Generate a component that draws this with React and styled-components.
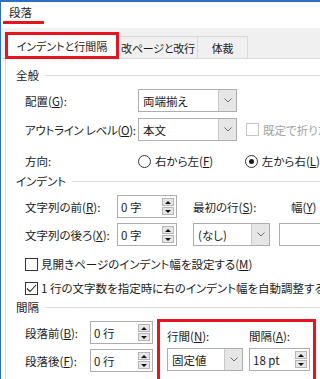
import React from 'react';
import styled, { createGlobalStyle } from 'styled-components';

const RED = '#e5141e';
const BLUE = '#2b6fc2';

const Global = createGlobalStyle`
  html, body { margin: 0; padding: 0; background: #fff; overflow: hidden; }
  body { font-family: "Noto Sans CJK JP", "Noto Sans", sans-serif; }
`;

const Window = styled.div`
  width: 320px;
  height: 379px;
  box-sizing: border-box;
  border-top: 2px solid ${BLUE};
  border-left: 1px solid ${BLUE};
  background: #fff;
  overflow: hidden;
  color: #1b1b1b;
  font-size: 11.5px;
  line-height: 16px;
  font-feature-settings: "palt";
  display: flex;
  flex-direction: column;
  white-space: nowrap;
`;

const TitleBar = styled.div`
  height: 28px;
  box-sizing: border-box;
  padding-top: 2px;
  display: flex;
  align-items: flex-start;
`;

const Title = styled.span`
  margin-left: 2px;
  padding: 0 12px 1px 6px;
  border-bottom: 3px solid ${RED};
  font-size: 11.5px;
  color: #222;
`;

const TabStrip = styled.div`
  height: 33px;
  box-sizing: border-box;
  background: #f0f0f0;
  border-bottom: 1px solid #dadada;
  display: flex;
  align-items: flex-end;
  padding-left: 4px;
`;

const Tab = styled.div`
  box-sizing: border-box;
  display: flex;
  align-items: center;
  justify-content: center;
  font-size: 11px;
  letter-spacing: ${p => (p.$active ? 0 : -0.2)}px;
  width: ${p => p.$w}px;
  height: ${p => (p.$active ? 27 : 22)}px;
  margin-bottom: ${p => (p.$active ? -1 : 0)}px;
  margin-left: ${p => p.$ml || 0}px;
  background: ${p => (p.$active ? '#fff' : '#f0f0f0')};
  border: ${p => (p.$active ? `3px solid ${RED}` : '1px solid #d9d9d9')};
  border-bottom: ${p => (p.$active ? `3px solid ${RED}` : 'none')};
  position: relative;
  z-index: ${p => (p.$active ? 1 : 0)};
`;

const Panel = styled.div`
  flex: 1;
  margin-left: 4px;
  border-left: 1px solid #dadada;
  padding: 8px 0 0 10px;
  display: flex;
  flex-direction: column;
`;

const GroupHeader = styled.div`
  display: flex;
  align-items: center;
  height: 16px;
  margin-top: ${p => p.$mt || 0}px;
  &::after {
    content: '';
    flex: 1;
    height: 1px;
    background: #dcdcdc;
    margin-left: 6px;
  }
`;

const Row = styled.div`
  display: flex;
  align-items: center;
  padding-left: 9px;
  height: ${p => p.$h}px;
  margin-top: ${p => p.$mt}px;
`;

const Label = styled.span`
  display: inline-block;
  width: ${p => (p.$w ? `${p.$w}px` : 'auto')};
  flex: none;
  margin-left: ${p => p.$ml || 0}px;
  letter-spacing: ${p => p.$ls || 0}px;
  color: ${p => (p.$disabled ? '#a3a3a3' : 'inherit')};
`;

const SelectBox = styled.div`
  box-sizing: border-box;
  width: ${p => p.$w}px;
  height: 23px;
  border: 1px solid #adadad;
  background: #fff;
  display: flex;
  align-items: stretch;
  flex: none;
`;

const SelectText = styled.span`
  flex: 1;
  display: flex;
  align-items: center;
  padding-left: 4px;
`;

const SelectArrow = styled.span`
  width: 17px;
  background: #e6e6e6;
  border-left: 1px solid #c9c9c9;
  display: flex;
  align-items: center;
  justify-content: center;
`;

const Chevron = () => (
  <svg width="8" height="5" viewBox="0 0 8 5">
    <path d="M0.5 0.5 L4 4 L7.5 0.5" fill="none" stroke="#6b6b6b" strokeWidth="1" />
  </svg>
);

const Select = ({ w, children }) => (
  <SelectBox $w={w}>
    <SelectText>{children}</SelectText>
    <SelectArrow>
      <Chevron />
    </SelectArrow>
  </SelectBox>
);

const SpinBox = styled.div`
  box-sizing: border-box;
  width: ${p => p.$w}px;
  height: 23px;
  border: 1px solid #adadad;
  background: #fff;
  display: flex;
  align-items: stretch;
  flex: none;
`;

const SpinText = styled.span`
  flex: 1;
  display: flex;
  align-items: center;
  padding-left: 3px;
`;

const SpinButtons = styled.span`
  display: flex;
  flex-direction: column;
  padding: 2px 2px 2px 0;
  gap: 1px;
`;

const SpinButton = styled.span`
  box-sizing: border-box;
  width: 12px;
  flex: 1;
  background: #e6e6e6;
  border: 1px solid #b5b5b5;
  display: flex;
  align-items: center;
  justify-content: center;
  &::after {
    content: '';
    border-left: 3px solid transparent;
    border-right: 3px solid transparent;
    ${p => (p.$down ? 'border-top: 3px solid #111;' : 'border-bottom: 3px solid #111;')}
  }
`;

const Spinner = ({ w, children }) => (
  <SpinBox $w={w}>
    <SpinText>{children}</SpinText>
    <SpinButtons>
      <SpinButton />
      <SpinButton $down />
    </SpinButtons>
  </SpinBox>
);

const CheckBox = styled.span`
  box-sizing: border-box;
  width: 13px;
  height: 13px;
  border: 1px solid ${p => (p.$disabled ? '#c4c4c4' : '#333')};
  background: #fff;
  flex: none;
  margin-left: ${p => p.$ml || 0}px;
  margin-right: ${p => p.$mr || 3}px;
  display: flex;
  align-items: center;
  justify-content: center;
`;

const Radio = styled.span`
  box-sizing: border-box;
  width: 13px;
  height: 13px;
  border-radius: 50%;
  border: 1px solid #333;
  background: #fff;
  flex: none;
  margin-right: 4px;
  display: flex;
  align-items: center;
  justify-content: center;
  &::after {
    content: '';
    width: 5px;
    height: 5px;
    border-radius: 50%;
    background: ${p => (p.$on ? '#1b1b1b' : 'transparent')};
  }
`;

const RadioItem = styled.span`
  display: flex;
  align-items: center;
  width: ${p => (p.$w ? `${p.$w}px` : 'auto')};
`;

const CheckMark = () => (
  <svg width="11" height="9" viewBox="0 0 11 9">
    <path d="M1 4.5 L4 7.5 L10 1" fill="none" stroke="#222" strokeWidth="1.1" />
  </svg>
);

const IndentGrid = styled.div`
  display: grid;
  grid-template-columns: 92px 76px 86px 60px;
  grid-template-rows: 23px 23px;
  row-gap: 5px;
  align-items: center;
  padding-left: 9px;
  margin-top: 6px;
`;

const SpacingArea = styled.div`
  display: flex;
  align-items: flex-start;
  margin-top: 4px;
`;

const SpacingLeft = styled.div`
  display: flex;
  flex-direction: column;
  gap: 5px;
  padding: 2px 0 0 9px;
  width: 128px;
`;

const SpacingRow = styled.div`
  display: flex;
  align-items: center;
  height: 23px;
`;

const Highlight = styled.div`
  margin-left: 4px;
  width: 159px;
  box-sizing: border-box;
  border: 3px solid ${RED};
  border-bottom: none;
  height: 60px;
  padding: 6px 0 0 7px;
  display: grid;
  grid-template-columns: 76px 61px;
  column-gap: 6px;
  grid-template-rows: 16px 23px;
  row-gap: 4px;
`;

const U = styled.u`
  text-underline-offset: 1px;
`;

export default function App() {
  return (
    <>
      <Global />
      <Window>
        <TitleBar>
          <Title>段落</Title>
        </TitleBar>
        <TabStrip>
          <Tab $active $w={114}>インデントと行間隔</Tab>
          <Tab $w={80} $ml={-1}>改ページと改行</Tab>
          <Tab $w={51} $ml={-1}>体裁</Tab>
        </TabStrip>
        <Panel>
          <GroupHeader>全般</GroupHeader>
          <Row $h={23} $mt={6}>
            <Label $w={113}>配置(<U>G</U>):</Label>
            <Select w={99}>両端揃え</Select>
          </Row>
          <Row $h={23} $mt={6}>
            <Label $w={113} $ls={-0.3}>アウトライン レベル(<U>O</U>):</Label>
            <Select w={99}>本文</Select>
            <CheckBox $disabled $mr={4} $ml={9} />
            <Label $disabled>既定で折りたたみ</Label>
          </Row>
          <Row $h={20} $mt={10}>
            <Label $w={113}>方向:</Label>
            <RadioItem $w={108}>
              <Radio />
              右から左(<U>F</U>)
            </RadioItem>
            <RadioItem>
              <Radio $on />
              左から右(<U>L</U>)
            </RadioItem>
          </Row>
          <GroupHeader $mt={2}>インデント</GroupHeader>
          <IndentGrid>
            <Label>文字列の前(<U>R</U>):</Label>
            <Spinner w={60}>0 字</Spinner>
            <Label>最初の行(<U>S</U>):</Label>
            <Label $ml={12}>幅(<U>Y</U>)</Label>
            <Label>文字列の後ろ(<U>X</U>):</Label>
            <Spinner w={60}>0 字</Spinner>
            <Select w={77}>(なし)</Select>
            <Spinner w={60}></Spinner>
          </IndentGrid>
          <Row $h={18} $mt={9}>
            <CheckBox />
            見開きページのインデント幅を設定する(<U>M</U>)
          </Row>
          <Row $h={18} $mt={6}>
            <CheckBox>
              <CheckMark />
            </CheckBox>
            1 行の文字数を指定時に右のインデント幅を自動調整する(<U>D</U>)
          </Row>
          <GroupHeader $mt={2}>間隔</GroupHeader>
          <SpacingArea>
            <SpacingLeft>
              <SpacingRow>
                <Label $w={65}>段落前(<U>B</U>):</Label>
                <Spinner w={63}>0 行</Spinner>
              </SpacingRow>
              <SpacingRow>
                <Label $w={65}>段落後(<U>F</U>):</Label>
                <Spinner w={63}>0 行</Spinner>
              </SpacingRow>
            </SpacingLeft>
            <Highlight>
              <Label>行間(<U>N</U>):</Label>
              <Label>間隔(<U>A</U>):</Label>
              <Select w={76}>固定値</Select>
              <Spinner w={61}>18 pt</Spinner>
            </Highlight>
          </SpacingArea>
        </Panel>
      </Window>
    </>
  );
}
